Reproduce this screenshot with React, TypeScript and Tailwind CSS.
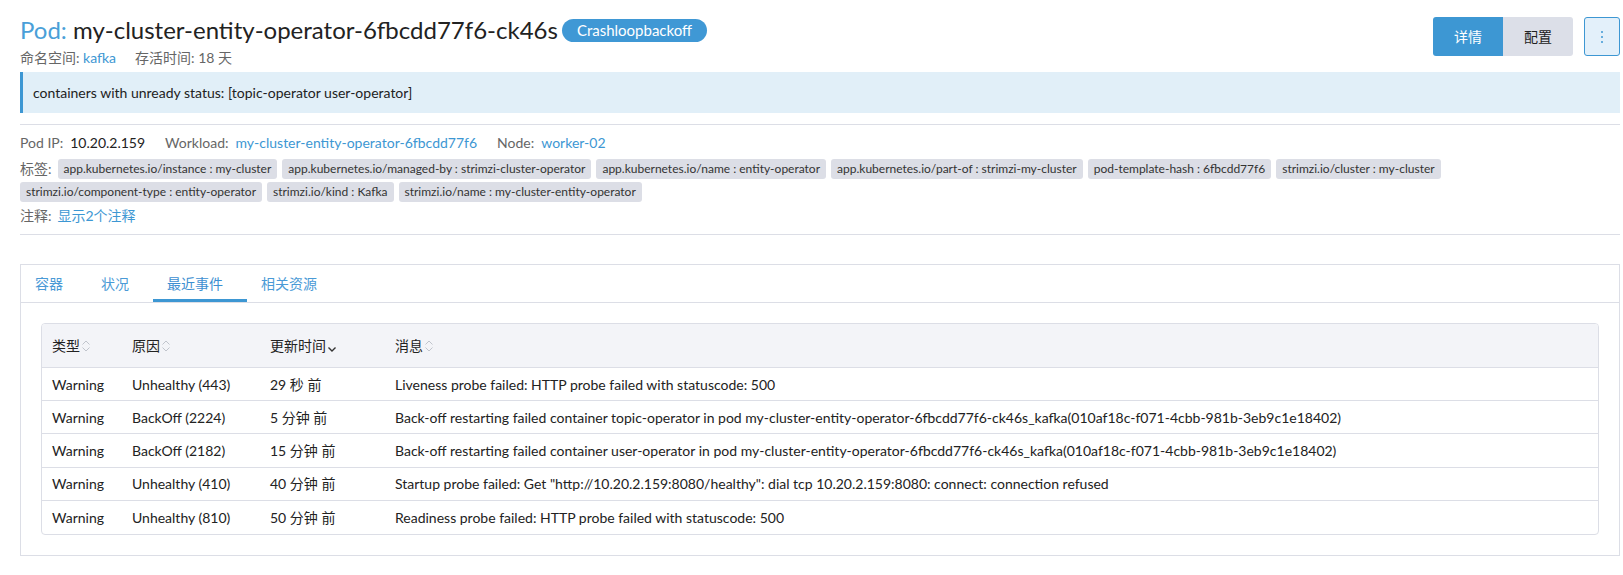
import React from 'react';

interface EventRow {
  type: string;
  reason: string;
  time: string;
  message: string;
}

const labels = [
  'app.kubernetes.io/instance : my-cluster',
  'app.kubernetes.io/managed-by : strimzi-cluster-operator',
  'app.kubernetes.io/name : entity-operator',
  'app.kubernetes.io/part-of : strimzi-my-cluster',
  'pod-template-hash : 6fbcdd77f6',
  'strimzi.io/cluster : my-cluster',
  'strimzi.io/component-type : entity-operator',
  'strimzi.io/kind : Kafka',
  'strimzi.io/name : my-cluster-entity-operator',
];

const events: EventRow[] = [
  {
    type: 'Warning',
    reason: 'Unhealthy (443)',
    time: '29 秒 前',
    message: 'Liveness probe failed: HTTP probe failed with statuscode: 500',
  },
  {
    type: 'Warning',
    reason: 'BackOff (2224)',
    time: '5 分钟 前',
    message:
      'Back-off restarting failed container topic-operator in pod my-cluster-entity-operator-6fbcdd77f6-ck46s_kafka(010af18c-f071-4cbb-981b-3eb9c1e18402)',
  },
  {
    type: 'Warning',
    reason: 'BackOff (2182)',
    time: '15 分钟 前',
    message:
      'Back-off restarting failed container user-operator in pod my-cluster-entity-operator-6fbcdd77f6-ck46s_kafka(010af18c-f071-4cbb-981b-3eb9c1e18402)',
  },
  {
    type: 'Warning',
    reason: 'Unhealthy (410)',
    time: '40 分钟 前',
    message:
      'Startup probe failed: Get "http://10.20.2.159:8080/healthy": dial tcp 10.20.2.159:8080: connect: connection refused',
  },
  {
    type: 'Warning',
    reason: 'Unhealthy (810)',
    time: '50 分钟 前',
    message: 'Readiness probe failed: HTTP probe failed with statuscode: 500',
  },
];

const tabs = ['容器', '状况', '最近事件', '相关资源'];

const SortIcon: React.FC<{ down?: boolean }> = ({ down }) => (
  <svg width="10" height="14" viewBox="0 0 10 14" className="ml-[1px]">
    {!down && (
      <path d="M1.5 5.5 L5 2 L8.5 5.5" fill="none" stroke="#c0c4cc" strokeWidth="1" />
    )}
    <path
      d="M1.5 8.5 L5 12 L8.5 8.5"
      fill="none"
      stroke={down ? '#333' : '#c0c4cc'}
      strokeWidth={down ? 1.4 : 1}
    />
  </svg>
);

const App: React.FC = () => {
  return (
    <div
      className="min-h-[575px] w-full bg-white pl-[20px] pr-[3px] text-[#222]"
      style={{ fontFamily: 'Lato, "Noto Sans CJK SC", sans-serif' }}
    >
      {/* header */}
      <div className="flex justify-between pt-[16px]">
        <div>
          <div className="flex h-[28px] items-center">
            <h1 className="text-[24px] font-normal leading-[28px]">
              <span className="text-[#4a9fd8]">Pod: </span>
              my-cluster-entity-operator-6fbcdd77f6-ck46s
            </h1>
            <span className="ml-[4px] flex h-[23px] items-center rounded-full bg-[#3f98d5] px-[15px] text-[15px] text-white">
              Crashloopbackoff
            </span>
          </div>
          <div className="mt-[5px] flex text-[14px] leading-[18px] text-[#666]">
            <span>
              命名空间: <span className="text-[#3d97d3]">kafka</span>
            </span>
            <span className="ml-[19px]">存活时间: 18 天</span>
          </div>
        </div>
        <div className="flex items-start pt-[1px]">
          <div className="flex">
            <button className="h-[39px] w-[70px] rounded-l-[3px] bg-[#3d97d3] text-[14px] text-white">
              详情
            </button>
            <button className="h-[39px] w-[70px] rounded-r-[3px] bg-[#dcdfe8] text-[14px] text-[#222]">
              配置
            </button>
          </div>
          <button className="ml-[11px] flex h-[39px] w-[36px] flex-col items-center justify-center gap-[3px] rounded-[3px] border border-[#3d97d3] bg-[#e3f0fa]">
            <span className="h-[2px] w-[2px] rounded-full bg-[#3d97d3]" />
            <span className="h-[2px] w-[2px] rounded-full bg-[#3d97d3]" />
            <span className="h-[2px] w-[2px] rounded-full bg-[#3d97d3]" />
          </button>
        </div>
      </div>

      {/* status banner */}
      <div className="mt-[5px] flex h-[41px] items-center border-l-[3px] border-[#3d97d3] bg-[#e1eff8] pl-[10px] text-[14px]">
        containers with unready status: [topic-operator user-operator]
      </div>

      <div className="mt-[11px] border-t border-[#dcdee6]" />

      {/* pod info */}
      <div className="mt-[9px] flex text-[14px] leading-[18px]">
        <span className="text-[#666]">Pod IP:</span>
        <span className="ml-[7px]">10.20.2.159</span>
        <span className="ml-[20px] text-[#666]">Workload:</span>
        <span className="ml-[7px] text-[#3d97d3]">my-cluster-entity-operator-6fbcdd77f6</span>
        <span className="ml-[20px] text-[#666]">Node:</span>
        <span className="ml-[7px] text-[#3d97d3]">worker-02</span>
      </div>

      <div className="mt-[7px] flex flex-wrap items-center gap-x-[5px] gap-y-[3px]">
        <span className="mr-[1px] text-[14px] leading-[20px] text-[#666]">标签:</span>
        {labels.map((l) => (
          <span
            key={l}
            className="flex h-[20px] items-center rounded-[3px] bg-[#dcdee6] px-[6px] text-[12px] text-[#333]"
          >
            {l}
          </span>
        ))}
      </div>

      <div className="mt-[5px] text-[14px] leading-[18px]">
        <span className="text-[#666]">注释:</span>
        <span className="ml-[6px] text-[#3d97d3]">显示2个注释</span>
      </div>

      <div className="mt-[9px] border-t border-[#dcdee6]" />

      {/* tabs card */}
      <div className="mt-[29px] border border-[#dcdee6]">
        <div className="flex h-[38px] border-b border-[#dcdee6]">
          {tabs.map((t) => (
            <div
              key={t}
              className={`flex items-center pl-[14px] pr-[24px] text-[14px] ${
                t === '最近事件'
                  ? 'border-b-[3px] border-[#3d97d3] pt-[3px] text-[#3d8fd1]'
                  : 'text-[#4a9ad6]'
              }`}
            >
              {t}
            </div>
          ))}
        </div>

        <div className="px-[20px] pt-[20px] pb-[20px]">
          <div className="overflow-hidden rounded-[4px] border border-[#dcdee6] text-[14px]">
            <div className="grid h-[44px] grid-cols-[80px_138px_125px_1fr] items-center border-b border-[#dcdee6] bg-[#f3f4f8]">
              <div className="flex items-center pl-[10px]">
                类型<SortIcon />
              </div>
              <div className="flex items-center pl-[10px]">
                原因<SortIcon />
              </div>
              <div className="flex items-center pl-[10px]">
                更新时间<SortIcon down />
              </div>
              <div className="flex items-center pl-[10px]">
                消息<SortIcon />
              </div>
            </div>
            {events.map((e, i) => (
              <div
                key={i}
                className={`grid h-[33.2px] grid-cols-[80px_138px_125px_1fr] items-center ${
                  i < events.length - 1 ? 'border-b border-[#dcdee6]' : ''
                }`}
              >
                <div className="pl-[10px]">{e.type}</div>
                <div className="pl-[10px]">{e.reason}</div>
                <div className="pl-[10px]">{e.time}</div>
                <div className="truncate pl-[10px]">{e.message}</div>
              </div>
            ))}
          </div>
        </div>
      </div>
    </div>
  );
};

export default App;
